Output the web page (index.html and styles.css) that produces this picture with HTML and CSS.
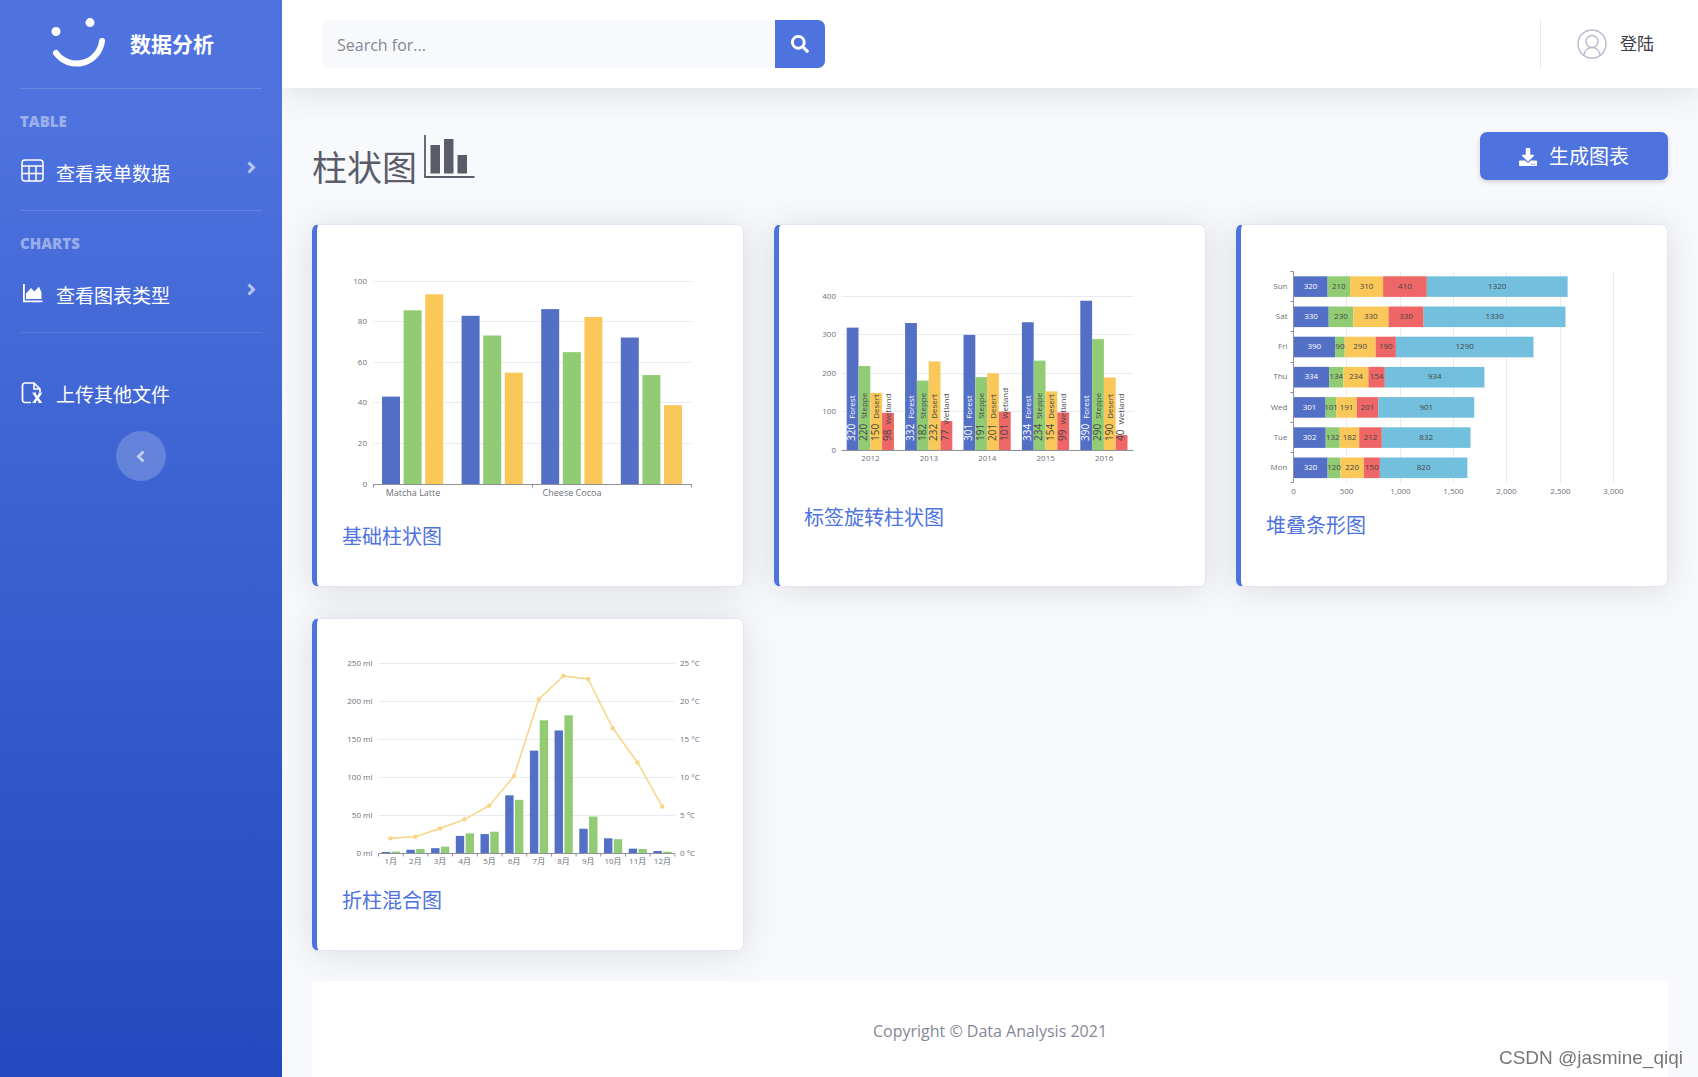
FILE: index.html
```html
<!DOCTYPE html>
<html lang="zh-CN">
<head>
<meta charset="utf-8">
<meta name="viewport" content="width=device-width, initial-scale=1">
<title>数据分析</title>
<link rel="stylesheet" href="styles.css">
</head>
<body>
<div class="layout">
  <nav class="sidebar">
    <a class="brand" href="#">
      <svg class="brand-icon" viewBox="0 0 56 52" aria-hidden="true">
        <circle cx="5" cy="13.500" r="4.5"/><circle cx="39" cy="4.600" r="4.500"/>
        <path d="M5 35 A25.500 25.500 0 0 0 51 23" fill="none" stroke-width="6" stroke-linecap="round"/>
      </svg>
      <span>数据分析</span>
    </a>
    <h2 class="nav-heading">TABLE</h2>
    <a class="nav-link" href="#">
      <svg class="nav-icon" viewBox="0 0 24 24" fill="none" stroke="currentColor" stroke-width="1.500" aria-hidden="true">
        <rect x="2" y="1" width="21" height="21" rx="3"/><path d="M2 7h21M2 14.500h21M9 7v15M16 7v15"/>
      </svg>
      <span>查看表单数据</span>
      <svg class="chevron" viewBox="0 0 12 18" aria-hidden="true"><path d="M3.500 3.500L8.500 8.500l-5 5"/></svg>
    </a>
    <h2 class="nav-heading">CHARTS</h2>
    <a class="nav-link" href="#">
      <svg class="nav-icon" viewBox="0 0 24 24" fill="currentColor" aria-hidden="true">
        <path d="M3 3h1.800v16.400H22.500v1.800H3z"/><path d="M6 18v-5.500l5-5.500 3.500 3.500L19 5.500l2.500 6V18z"/>
      </svg>
      <span>查看图表类型</span>
      <svg class="chevron" viewBox="0 0 12 18" aria-hidden="true"><path d="M3.500 3.500L8.500 8.500l-5 5"/></svg>
    </a>
    <a class="nav-link nav-link-upload" href="#">
      <svg class="nav-icon" viewBox="0 0 24 24" fill="none" stroke="currentColor" stroke-width="1.700" aria-hidden="true">
        <path d="M11 22.500H5A2.500 2.500 0 0 1 2.500 20V5.500A2.500 2.500 0 0 1 5 3h9l6 6v3M14 3v6h6"/>
        <path d="M14 13.500l6.500 9M20.500 13.500l-6.500 9" stroke-width="2.400"/><path d="M12.500 13.200h3.500M18.500 13.200h3.500M12.500 22.500h3.500M18.500 22.500h3.500" stroke-width="1.200"/>
      </svg>
      <span>上传其他文件</span>
    </a>
    <button class="sidebar-toggle" type="button" aria-label="收起侧栏">
      <svg class="chevron" viewBox="0 0 12 18" aria-hidden="true"><path d="M8.500 4.500L3.500 9.500l5 5"/></svg>
    </button>
  </nav>

  <div class="main">
    <header class="topbar">
      <form class="search">
        <input class="search-input" type="text" placeholder="Search for..." aria-label="Search for">
        <button class="search-button" type="button" aria-label="Search">
          <svg viewBox="0 0 512 512" fill="currentColor" aria-hidden="true"><path d="M505 442.700L405.300 343c-4.500-4.500-10.600-7-17-7H372c27.600-35.300 44-79.700 44-128C416 93.100 322.900 0 208 0S0 93.100 0 208s93.100 208 208 208c48.300 0 92.700-16.400 128-44v16.300c0 6.400 2.500 12.500 7 17l99.700 99.700c9.400 9.400 24.600 9.400 33.900 0l28.300-28.300c9.400-9.400 9.400-24.600.1-34zM208 336c-70.700 0-128-57.200-128-128 0-70.700 57.200-128 128-128 70.700 0 128 57.200 128 128 0 70.700-57.200 128-128 128z"/></svg>
        </button>
      </form>
      <a class="user" href="#">
        <svg viewBox="0 0 30 30" fill="none" stroke="currentColor" stroke-width="1.400" aria-hidden="true">
          <circle cx="15" cy="15" r="14"/><circle cx="15" cy="12.500" r="6"/><path d="M7 26.200c.5-5 4-7.700 8-7.700s7.500 2.700 8 7.700"/>
        </svg>
        <span>登陆</span>
      </a>
    </header>

    <main class="content">
      <div class="page-head">
        <h1>柱状图
          <svg viewBox="0 0 51 51" aria-hidden="true"><path d="M1 3v42h49.500" fill="none" stroke="currentColor" stroke-width="1.800"/><path d="M6.500 13h9.500v28.500H6.500zM20 7h9.500v34.500H20zM33.500 23H43v18.500h-9.500z" fill="currentColor"/></svg>
        </h1>
        <button class="generate" type="button">
          <svg viewBox="0 0 512 512" fill="currentColor" aria-hidden="true"><path d="M216 0h80c13.300 0 24 10.700 24 24v168h87.700c17.800 0 26.700 21.500 14.100 34.100L269.700 378.300c-7.500 7.500-19.800 7.500-27.300 0L90.100 226.100c-12.600-12.600-3.700-34.100 14.100-34.100H192V24c0-13.300 10.700-24 24-24zm296 376v112c0 13.300-10.700 24-24 24H24c-13.300 0-24-10.700-24-24V376c0-13.300 10.700-24 24-24h146.700l49 49c20.100 20.100 52.500 20.100 72.600 0l49-49H488c13.300 0 24 10.700 24 24zm-124 88c0-11-9-20-20-20s-20 9-20 20 9 20 20 20 20-9 20-20zm64 0c0-11-9-20-20-20s-20 9-20 20 9 20 20 20 20-9 20-20z"/></svg>
          <span>生成图表</span>
        </button>
      </div>

      <section class="cards">
        <article class="card">
          <svg class="chart" id="chart-basic" viewBox="0 0 376 263" role="img" aria-label="基础柱状图"></svg>
          <a class="card-title" href="#">基础柱状图</a>
        </article>
        <article class="card">
          <svg class="chart" id="chart-rotated" viewBox="0 0 376 225" role="img" aria-label="标签旋转柱状图"></svg>
          <a class="card-title" href="#">标签旋转柱状图</a>
        </article>
        <article class="card">
          <svg class="chart" id="chart-stacked" viewBox="0 0 376 241" role="img" aria-label="堆叠条形图"></svg>
          <a class="card-title" href="#">堆叠条形图</a>
        </article>
        <article class="card">
          <svg class="chart" id="chart-mixed" viewBox="0 0 376 233" role="img" aria-label="折柱混合图"></svg>
          <a class="card-title" href="#">折柱混合图</a>
        </article>
      </section>

      <footer class="footer">Copyright © Data Analysis 2021</footer>
    </main>
  </div>
</div>
<div class="watermark">CSDN @jasmine_qiqi</div>
<script src="charts.js"></script>
</body>
</html>
```
FILE: styles.css
```css
*, *::before, *::after { box-sizing: border-box; }

body {
  margin: 0;
  background: #f8f9fc;
  color: #858796;
  font-family: "Open Sans", "Noto Sans CJK SC", sans-serif;
  font-size: 16px;
  line-height: 20px;
}
a { color: inherit; text-decoration: none; }
button { border: 0; padding: 0; font: inherit; cursor: pointer; }
svg { display: block; flex: none; }

.layout { display: flex; min-height: 100vh; }

/* Sidebar */
.sidebar {
  position: relative;
  z-index: 1;
  flex: none;
  width: 282px;
  padding: 0 20px;
  color: #fff;
  background: linear-gradient(180deg, #4e73df 10%, #224abe 100%);
}
.brand {
  display: flex;
  align-items: center;
  gap: 23px;
  height: 88px;
  padding-left: 31px;
  font-size: 21px;
  font-weight: 700;
}
.brand-icon { width: 56px; height: 52px; overflow: visible; fill: #fff; stroke: #fff; stroke-width: 0; }
.nav-heading {
  margin: 0;
  padding-top: 22px;
  border-top: 1px solid rgba(255, 255, 255, .15);
  color: rgba(255, 255, 255, .45);
  font-size: 15px;
  font-weight: 800;
  line-height: 20px;
}
.nav-link {
  display: flex;
  align-items: flex-start;
  gap: 12px;
  padding: 28px 0 21px;
  font-size: 19px;
  line-height: 30px;
}
.nav-link span { flex: 1; }
.nav-icon { width: 24px; height: 24px; }
.chevron {
  width: 12px;
  height: 18px;
  margin-right: 5px;
  fill: none;
  stroke: rgba(255, 255, 255, .6);
  stroke-width: 3;
}
.nav-link-upload {
  padding-top: 47px;
  border-top: 1px solid rgba(255, 255, 255, .1);
}
.sidebar-toggle {
  display: flex;
  align-items: center;
  justify-content: center;
  width: 50px;
  height: 50px;
  margin: 0 auto;
  border-radius: 50%;
  background: rgba(255, 255, 255, .2);
}
.sidebar-toggle .chevron { margin: 0; }

/* Top bar */
.main { flex: 1; min-width: 0; display: flex; flex-direction: column; }
.topbar {
  display: flex;
  align-items: center;
  justify-content: space-between;
  height: 88px;
  padding: 0 44px 0 40px;
  background: #fff;
  box-shadow: 0 3px 35px rgba(58, 59, 69, .15);
}
.search { display: flex; width: 503px; height: 48px; }
.search-input {
  flex: 1;
  min-width: 0;
  padding: 2px 15px 0;
  border: 0;
  border-radius: 7px 0 0 7px;
  background: #f8f9fc;
  color: #6e707e;
  font: inherit;
}
.search-input::placeholder { color: #858796; opacity: 1; }
.search-button {
  display: flex;
  align-items: center;
  justify-content: center;
  width: 50px;
  border-radius: 0 7px 7px 0;
  background: #4e73df;
  color: #fff;
}
.search-button svg { width: 18px; height: 18px; }
.user {
  display: flex;
  align-items: center;
  gap: 13px;
  height: 48px;
  padding-left: 36px;
  border-left: 1px solid #e3e6f0;
  color: #3a3b45;
  font-size: 17px;
}
.user svg { width: 30px; height: 30px; color: #b7b9cc; }

/* Content */
.content { flex: 1; display: flex; flex-direction: column; padding: 44px 30px 0; }
.page-head {
  display: flex;
  align-items: flex-start;
  justify-content: space-between;
  margin-bottom: 20px;
}
h1 {
  display: flex;
  gap: 7px;
  margin: 0;
  color: #5a5c69;
  font-size: 35px;
  font-weight: 400;
  line-height: 72px;
}
h1 svg { width: 51px; height: 51px; }
.generate {
  display: flex;
  align-items: center;
  justify-content: center;
  gap: 12px;
  width: 188px;
  height: 48px;
  padding-top: 2px;
  border-radius: 7px;
  background: #4e73df;
  box-shadow: 0 2px 5px rgba(58, 59, 69, .2);
  color: #fff;
  font-size: 20px;
}
.generate svg { width: 18px; height: 18px; }

.cards {
  display: grid;
  grid-template-columns: repeat(3, 1fr);
  gap: 31px 30px;
  margin-bottom: 30px;
}
.card {
  display: flex;
  flex-direction: column;
  justify-content: center;
  padding: 34px 25px;
  border: 1px solid #e3e6f0;
  border-left: 5px solid #4e73df;
  border-radius: 7px;
  background: #fff;
  box-shadow: 0 3px 35px rgba(58, 59, 69, .15);
}
.card-title { color: #4e73df; font-size: 20px; line-height: 30px; }

/* Charts */
.chart { width: 100%; height: auto; fill: #6e7079; font-size: 8px; }
.chart line { stroke: #e8ebf2; stroke-width: 1; }
.chart .axis { stroke: #8d909a; }
.chart .category { font-size: 9px; }
.chart .on-dark { fill: #fff; }
.chart .on-light { fill: #464646; }
.chart .value { font-size: 10px; }
.chart .trend { fill: none; stroke: #f8d584; stroke-width: 1.5; }

.footer {
  flex: 1;
  padding: 40px 0 34px;
  background: #fff;
  text-align: center;
}
.watermark {
  position: fixed;
  right: 15px;
  bottom: 8px;
  color: #777;
  font-family: "Liberation Sans", sans-serif;
  font-size: 19px;
  line-height: 22px;
  text-shadow: 0 0 1px #fff;
}
```
FILE: charts.js
```js
const BLUE = '#5470c6', GREEN = '#91cc75', YELLOW = '#fac858', RED = '#ee6666', SKY = '#73c0de';

const rect = (x, y, w, h, fill) => `<rect x="${x}" y="${y}" width="${w}" height="${h}" fill="${fill}"/>`;
const line = (x1, y1, x2, y2, cls = 'grid') => `<line class="${cls}" x1="${x1}" y1="${y1}" x2="${x2}" y2="${y2}"/>`;
const text = (x, y, s, anchor = 'middle', cls = '') => `<text class="${cls}" x="${x}" y="${y}" text-anchor="${anchor}">${s}</text>`;
const draw = (id, parts) => { document.getElementById(id).innerHTML = parts.join(''); };

// Grouped bars: three series per product
{
  const left = 31.5, right = 349.5, base = 225.5, unit = 2.03, out = [];
  for (let v = 0; v <= 100; v += 20) {
    const y = Math.round(base - v * unit) - 0.5;
    if (v) out.push(line(left, y, right, y));
    out.push(text(25, y + 2, v, 'end'));
  }
  [[43.3, 85.8, 93.7], [83.1, 73.4, 55.1], [86.4, 65.2, 82.5], [72.4, 53.9, 39.1]].forEach((row, g) =>
    row.forEach((v, i) => out.push(rect(40 + g * 79.6 + i * 21.6, base - v * unit, 18, v * unit, [BLUE, GREEN, YELLOW][i]))));
  out.push(line(left, base, right, base, 'axis'));
  [left, 190.5, right].forEach(x => out.push(line(x, base, x, base + 3, 'axis')));
  out.push(text(71, 237, 'Matcha Latte', 'middle', 'category'), text(230, 237, 'Cheese Cocoa', 'middle', 'category'));
  draw('chart-basic', out);
}

// Grouped bars with vertical labels inside
{
  const left = 37.5, right = 329.5, base = 172.5, unit = 0.384, out = [];
  for (let v = 0; v <= 400; v += 100) {
    const y = Math.round(base - v * unit) - 0.5;
    if (v) out.push(line(left, y, right, y));
    out.push(text(32, y + 2, v, 'end'));
  }
  const labels = [];
  [[320, 220, 150, 98], [332, 182, 232, 77], [301, 191, 201, 101], [334, 234, 154, 99], [390, 290, 190, 40]].forEach((row, g) => {
    row.forEach((v, i) => {
      const x = 42.7 + g * 58.4 + i * 11.8;
      out.push(rect(x, base - v * unit, 11.8, v * unit, [BLUE, GREEN, YELLOW, RED][i]));
      labels.push(`<text class="${i ? 'on-light' : 'on-dark'}" transform="translate(${x + 8.6} 163) rotate(-90)"><tspan class="value">${v}</tspan><tspan dx="5">${['Forest', 'Steppe', 'Desert', 'Wetland'][i]}</tspan></text>`);
    });
    out.push(text(66.5 + g * 58.4, 183, 2012 + g));
  });
  out.push(line(left, base, right, base, 'axis'));
  draw('chart-rotated', out.concat(labels));
}

// Stacked horizontal bars
{
  const left = 27.5, top = 1.5, bottom = 212.5, unit = 320 / 3000, step = 30.2, out = [], labels = [];
  for (let v = 0; v <= 3000; v += 500) {
    const x = Math.round(27 + v * unit) + 0.5;
    if (v) out.push(line(x, top, x, bottom));
    out.push(text(x, 224, v.toLocaleString('en-US')));
  }
  [['Sun', 320, 210, 310, 410, 1320], ['Sat', 330, 230, 330, 330, 1330], ['Fri', 390, 90, 290, 190, 1290],
   ['Thu', 334, 134, 234, 154, 934], ['Wed', 301, 101, 191, 201, 901], ['Tue', 302, 132, 182, 212, 832],
   ['Mon', 320, 120, 220, 150, 820]].forEach(([day, ...values], r) => {
    const y = 6.3 + r * step;
    let x = left;
    out.push(text(21.5, y + 12.5, day, 'end'));
    values.forEach((v, i) => {
      out.push(rect(x, y, v * unit, 20.6, [BLUE, GREEN, YELLOW, RED, SKY][i]));
      labels.push(text(x + v * unit / 2, y + 12.5, v, 'middle', i ? 'on-light' : 'on-dark'));
      x += v * unit;
    });
  });
  out.push(line(left, top, left, bottom, 'axis'));
  for (let i = 0; i <= 7; i++) {
    const y = Math.round(1 + i * step) + 0.5;
    out.push(line(left - 3, y, left, y, 'axis'));
  }
  draw('chart-stacked', out.concat(labels));
}

// Monthly rainfall bars with a temperature line
{
  const left = 36.5, right = 332.5, base = 200.5, unit = 0.7587, step = 24.7, out = [];
  for (let i = 0; i <= 5; i++) {
    const y = Math.round(200 - i * 50 * unit) + 0.5;
    if (i) out.push(line(left, y, right, y));
    out.push(text(30.5, y + 2, `${i * 50} ml`, 'end'), text(338, y + 2, `${i * 5} °C`, 'start'));
  }
  const evaporation = [2, 4.9, 7, 23.2, 25.6, 76.7, 135.6, 162.2, 32.6, 20, 6.4, 3.3];
  const rainfall = [2.6, 5.9, 9, 26.4, 28.7, 70.7, 175.6, 182.2, 48.7, 18.8, 6, 2.3];
  const temperature = [2, 2.2, 3.3, 4.5, 6.3, 10.2, 20.3, 23.4, 23, 16.5, 12, 6.2];
  evaporation.forEach((v, i) => {
    out.push(rect(39.7 + i * step, base - v * unit, 8.4, v * unit, BLUE));
    out.push(rect(49.5 + i * step, base - rainfall[i] * unit, 8.4, rainfall[i] * unit, GREEN));
    out.push(text(48.7 + i * step, 211, `${i + 1}月`));
  });
  out.push(line(left, base, right, base, 'axis'));
  for (let i = 0; i <= 12; i++) out.push(line(left + i * step, base, left + i * step, base + 3, 'axis'));
  const points = temperature.map((t, i) => [48.5 + i * step, base - t * 10 * unit]);
  out.push(`<polyline class="trend" points="${points.join(' ')}"/>`);
  points.forEach(([x, y]) => out.push(`<circle cx="${x}" cy="${y}" r="2.2" fill="#f8d584"/>`));
  draw('chart-mixed', out);
}
```
